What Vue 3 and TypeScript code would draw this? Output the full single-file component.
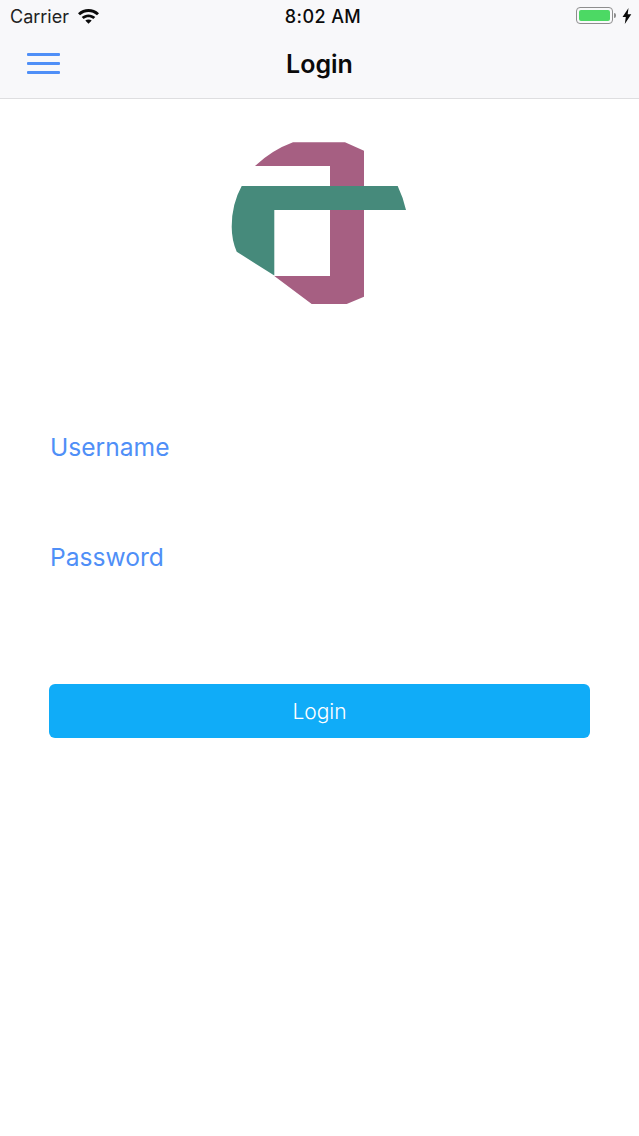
<script setup lang="ts">
const fields = ['Username', 'Password']
</script>

<template>
  <div class="page">
    <header class="top">
      <div class="status">
        <div class="status-left">
          <span class="carrier">Carrier</span>
          <svg class="wifi" width="23" height="17" viewBox="0 0 23 17">
            <path d="M1 6.2C7 .6 16 .6 22 6.2l-2 2.1C15 3.8 8 3.8 3 8.300z" fill="#0b0b0b" />
            <path d="M4.700 10C8.500 6.600 14.500 6.600 18.300 10l-2 2.100C13.500 9.700 9.500 9.700 6.700 12.100z" fill="#0b0b0b" />
            <path d="M8.300 13.600C10 12.200 13 12.200 14.700 13.600L11.500 16.800z" fill="#0b0b0b" />
          </svg>
        </div>
        <span class="time">8:02 AM</span>
        <div class="status-right">
          <span class="battery"><span class="battery-level" /></span>
          <span class="battery-tip" />
          <svg class="bolt" width="10" height="16" viewBox="0 0 10 16">
            <path d="M6.500 0L.5 9h3.300L2.800 16 9.300 6.300H5.700z" fill="#0b0b0b" />
          </svg>
        </div>
      </div>
      <nav class="nav">
        <button class="menu" aria-label="Menu">
          <span /><span /><span />
        </button>
        <h1 class="title">Login</h1>
      </nav>
    </header>

    <main class="content">
      <svg class="logo" width="200" height="185" viewBox="0 0 200 185">
        <path
          d="M35 36Q52 20 73 12.300H125L144 20.700V166.700L126.700 174H91.700L54.300 146H110V36Z"
          fill="#a65f82"
        />
        <path
          d="M21.700 56H177.700Q183 67 186 80H54.300V145.500L16.700 121.700Q11.700 110 11.700 96.700Q11.700 74 21.700 56Z"
          fill="#468a7b"
        />
      </svg>

      <form class="form" @submit.prevent>
        <label v-for="field in fields" :key="field" class="field">{{ field }}</label>
        <button class="submit" type="submit">Login</button>
      </form>
    </main>
  </div>
</template>

<style scoped>
.page {
  width: 639px;
  height: 1136px;
  background: #fff;
  font-family: Inter, 'Noto Sans', sans-serif;
  overflow: hidden;
}

.top {
  height: 98px;
  background: #f8f8fa;
  border-bottom: 1px solid #dedee0;
}

.status {
  display: grid;
  grid-template-columns: 1fr auto 1fr;
  align-items: center;
  height: 32px;
  padding: 0 7px 0 10px;
  color: #0b0b0b;
}

.status-left,
.status-right {
  display: flex;
  align-items: center;
}

.status-right {
  justify-content: flex-end;
  margin-top: -1px;
}

.carrier {
  font-size: 18px;
  color: #222;
}

.wifi {
  margin-left: 8px;
  margin-bottom: 2px;
}

.time {
  margin-left: 4px;
  font-size: 18px;
  font-weight: 500;
  letter-spacing: 0.4px;
}

.battery {
  display: block;
  width: 37px;
  height: 17px;
  padding: 2px;
  box-sizing: border-box;
  border: 1px solid #8e8e8e;
  border-radius: 4px;
}

.battery-level {
  display: block;
  height: 100%;
  background: #4cd964;
  border-radius: 2px;
}

.battery-tip {
  width: 2px;
  height: 5px;
  margin-left: 1px;
  background: #8e8e8e;
  border-radius: 0 2px 2px 0;
}

.bolt {
  margin-left: 6px;
}

.nav {
  display: flex;
  align-items: center;
  justify-content: center;
  height: 65px;
  position: relative;
}

.menu {
  position: absolute;
  left: 27px;
  top: 21px;
  display: flex;
  flex-direction: column;
  gap: 6px;
  width: 33px;
  padding: 0;
  border: none;
  background: none;
}

.menu span {
  display: block;
  height: 3px;
  background: #4f8ff7;
  border-radius: 1px;
}

.title {
  margin: 0;
  font-size: 25px;
  font-weight: 600;
  color: #0a0a0a;
  line-height: 65px;
}

.content {
  display: flex;
  flex-direction: column;
  align-items: center;
}

.logo {
  display: block;
  margin-top: 31px;
}

.form {
  display: flex;
  flex-direction: column;
  align-self: stretch;
  padding: 0 49px;
}

.field {
  height: 110px;
  padding-left: 1px;
  font-size: 24.6px;
  line-height: 30px;
  color: #4f8ff7;
}

.form .field:first-child {
  margin-top: 117px;
}

.submit {
  height: 54px;
  margin-top: 32px;
  border: none;
  border-radius: 6px;
  background: #10acf8;
  color: #fff;
  font-family: inherit;
  font-size: 21px;
  font-weight: 300;
}
</style>
